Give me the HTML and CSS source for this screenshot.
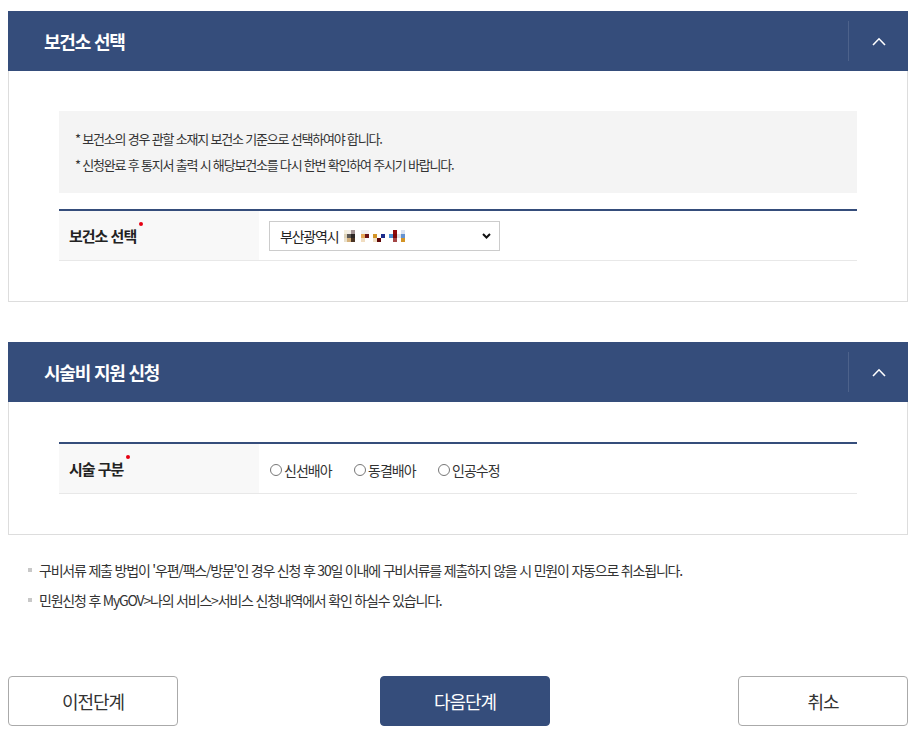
FILE: index.html
```html
<!DOCTYPE html>
<html lang="ko">

<head>
    <meta charset="utf-8">
    <title>시술비 지원 신청</title>
    <link rel="stylesheet" href="styles.css">
</head>

<body>
    <div class="page">

        <!-- 보건소 선택 -->
        <section class="panel">
            <div class="panel-head">
                <h2>보건소 선택</h2>
                <button class="toggle" type="button" aria-label="접기">
                    <svg width="14" height="9" viewBox="0 0 14 9">
                        <polyline points="1,8 7,1.8 13,8" fill="none" stroke="#fff" stroke-width="1.6" />
                    </svg>
                </button>
            </div>
            <div class="panel-body">
                <div class="guide">
                    <p>* 보건소의 경우 관할 소재지 보건소 기준으로 선택하여야 합니다.</p>
                    <p>* 신청완료 후 통지서 출력 시 해당보건소를 다시 한번 확인하여 주시기 바랍니다.</p>
                </div>
                <table class="form-table">
                    <tr>
                        <th><span class="req">보건소 선택</span></th>
                        <td>
                            <div class="select">
                                <span>부산광역시</span>
                                <svg class="mosaic" width="62" height="12" viewBox="0 0 62 12">
                                    <rect x="0" y="0" width="3" height="4" fill="#f4eedc" />
                                    <rect x="0" y="4" width="3" height="4" fill="#ddd2b8" />
                                    <rect x="0" y="8" width="3" height="4" fill="#e9e0cc" />
                                    <rect x="3" y="0" width="4" height="4" fill="#f3eee6" />
                                    <rect x="3" y="4" width="4" height="4" fill="#5d5954" />
                                    <rect x="3" y="8" width="4" height="4" fill="#d6b27c" />
                                    <rect x="7" y="0" width="4" height="4" fill="#a39393" />
                                    <rect x="7" y="4" width="4" height="4" fill="#2c2624" />
                                    <rect x="7" y="8" width="4" height="4" fill="#4a3424" />
                                    <rect x="17" y="0" width="4" height="4" fill="#efefef" />
                                    <rect x="17" y="4" width="4" height="4" fill="#e6a856" />
                                    <rect x="17" y="8" width="4" height="4" fill="#f1ddc0" />
                                    <rect x="21" y="0" width="4" height="4" fill="#f2eded" />
                                    <rect x="21" y="4" width="4" height="4" fill="#6b1212" />
                                    <rect x="29" y="4" width="4" height="4" fill="#d39426" />
                                    <rect x="29" y="8" width="4" height="4" fill="#f0e0c4" />
                                    <rect x="33" y="8" width="4" height="4" fill="#5e0606" />
                                    <rect x="37" y="4" width="4" height="4" fill="#1c2c8c" />
                                    <rect x="45" y="4" width="4" height="4" fill="#4b8fd2" />
                                    <rect x="49" y="0" width="4" height="4" fill="#8e0a0a" />
                                    <rect x="49" y="4" width="4" height="4" fill="#7e0808" />
                                    <rect x="49" y="8" width="4" height="4" fill="#a44646" />
                                    <rect x="53" y="4" width="4" height="4" fill="#e2e2e2" />
                                    <rect x="57" y="0" width="4" height="4" fill="#d9e1f0" />
                                    <rect x="57" y="4" width="4" height="4" fill="#6392d2" />
                                    <rect x="57" y="8" width="4" height="4" fill="#d39426" />
                                </svg>
                                <svg class="arrow" width="9" height="6" viewBox="0 0 9 6">
                                    <polyline points="1,1 4.5,4.5 8,1" fill="none" stroke="#111" stroke-width="2" />
                                </svg>
                            </div>
                        </td>
                    </tr>
                </table>
            </div>
        </section>

        <!-- 시술비 지원 신청 -->
        <section class="panel">
            <div class="panel-head">
                <h2>시술비 지원 신청</h2>
                <button class="toggle" type="button" aria-label="접기">
                    <svg width="14" height="9" viewBox="0 0 14 9">
                        <polyline points="1,8 7,1.8 13,8" fill="none" stroke="#fff" stroke-width="1.6" />
                    </svg>
                </button>
            </div>
            <div class="panel-body">
                <table class="form-table">
                    <tr>
                        <th><span class="req">시술 구분</span></th>
                        <td>
                            <label class="radio"><input type="radio" name="kind" value="1" />신선배아</label>
                            <label class="radio"><input type="radio" name="kind" value="2" />동결배아</label>
                            <label class="radio"><input type="radio" name="kind" value="3" />인공수정</label>
                        </td>
                    </tr>
                </table>
            </div>
        </section>

        <ul class="notes">
            <li>구비서류 제출 방법이 '우편/팩스/방문'인 경우 신청 후 30일 이내에 구비서류를 제출하지 않을 시 민원이 자동으로 취소됩니다.</li>
            <li>민원신청 후 MyGOV&gt;나의 서비스&gt;서비스 신청내역에서 확인 하실수 있습니다.</li>
        </ul>

        <div class="actions">
            <button class="btn" type="button">이전단계</button>
            <button class="btn btn-primary" type="button">다음단계</button>
            <button class="btn" type="button">취소</button>
        </div>
    </div>
</body>

</html>
```

FILE: styles.css
```css
body {
    margin: 0;
    background-color: #fff;
    color: #333;
    font-family: "Noto Sans CJK KR", "Noto Sans", sans-serif;
}

.page {
    padding: 11px 8px;
}

.panel + .panel {
    margin-top: 40px;
}

/* panel header */
.panel-head {
    display: flex;
    align-items: center;
    height: 60px;
    background-color: #354d7b;
    color: #fff;
}

.panel-head h2 {
    flex: 1;
    margin: 0;
    padding-left: 36px;
    font-size: 18px;
    font-weight: 700;
    letter-spacing: -1.2px;
}

.toggle {
    display: flex;
    align-items: center;
    justify-content: center;
    width: 60px;
    height: 40px;
    padding: 0;
    border: 0;
    border-left: 1px solid rgba(255, 255, 255, 0.12);
    background: none;
}

/* panel body */
.panel-body {
    border: 1px solid #ddd;
    border-top: 0;
    padding: 40px 50px;
}

.guide {
    margin-bottom: 16px;
    padding: 15px 16px;
    background-color: #f4f4f4;
    font-size: 13px;
    line-height: 26px;
    letter-spacing: -1.2px;
    color: #333;
}

.guide p {
    margin: 0;
}

.form-table {
    width: 100%;
    border-collapse: collapse;
    border-top: 2px solid #354d7b;
}

.form-table th,
.form-table td {
    height: 49px;
    padding: 0 10px;
    border-bottom: 1px solid #e8e8e8;
}

.form-table th {
    width: 180px;
    background-color: #f8f8f8;
    text-align: left;
    font-size: 15px;
    font-weight: 700;
    letter-spacing: -1px;
    color: #222;
}

.req {
    position: relative;
}

.req::after {
    content: "";
    position: absolute;
    top: -3px;
    right: -7px;
    width: 4px;
    height: 4px;
    border-radius: 50%;
    background-color: #e60012;
}

/* fake select */
.select {
    display: flex;
    align-items: center;
    box-sizing: border-box;
    width: 231px;
    height: 30px;
    padding: 0 8px 0 10px;
    border: 1px solid #ccc;
    background-color: #fff;
    font-size: 14px;
    letter-spacing: -1.2px;
    color: #222;
}

.mosaic {
    margin-left: 6px;
}

.select .arrow {
    margin-left: auto;
}

/* radio */
.radio {
    display: inline-flex;
    align-items: center;
    margin-right: 17px;
    font-size: 14px;
    letter-spacing: -1px;
    color: #333;
}

.radio input {
    appearance: none;
    box-sizing: border-box;
    width: 12px;
    height: 12px;
    margin: 0 2px 0 1px;
    border: 1px solid #777;
    border-radius: 50%;
}

/* notes */
.notes {
    list-style: none;
    margin: 20px 0 0;
    padding: 0 0 0 20px;
    font-size: 14px;
    line-height: 30px;
    letter-spacing: -1.2px;
    color: #333;
}

.notes li {
    display: flex;
    align-items: center;
}

.notes li::before {
    content: "";
    flex: none;
    width: 4px;
    height: 4px;
    margin-right: 7px;
    background-color: #c8c8c8;
}

/* buttons */
.actions {
    display: flex;
    justify-content: space-between;
    margin-top: 61px;
}

.btn {
    box-sizing: border-box;
    width: 170px;
    height: 50px;
    border: 1px solid #aaa;
    border-radius: 4px;
    background-color: #fff;
    font-family: inherit;
    font-size: 18px;
    letter-spacing: -1px;
    color: #333;
}

.btn-primary {
    margin-left: 14px;
    border-color: #354d7b;
    background-color: #354d7b;
    color: #fff;
}
```
